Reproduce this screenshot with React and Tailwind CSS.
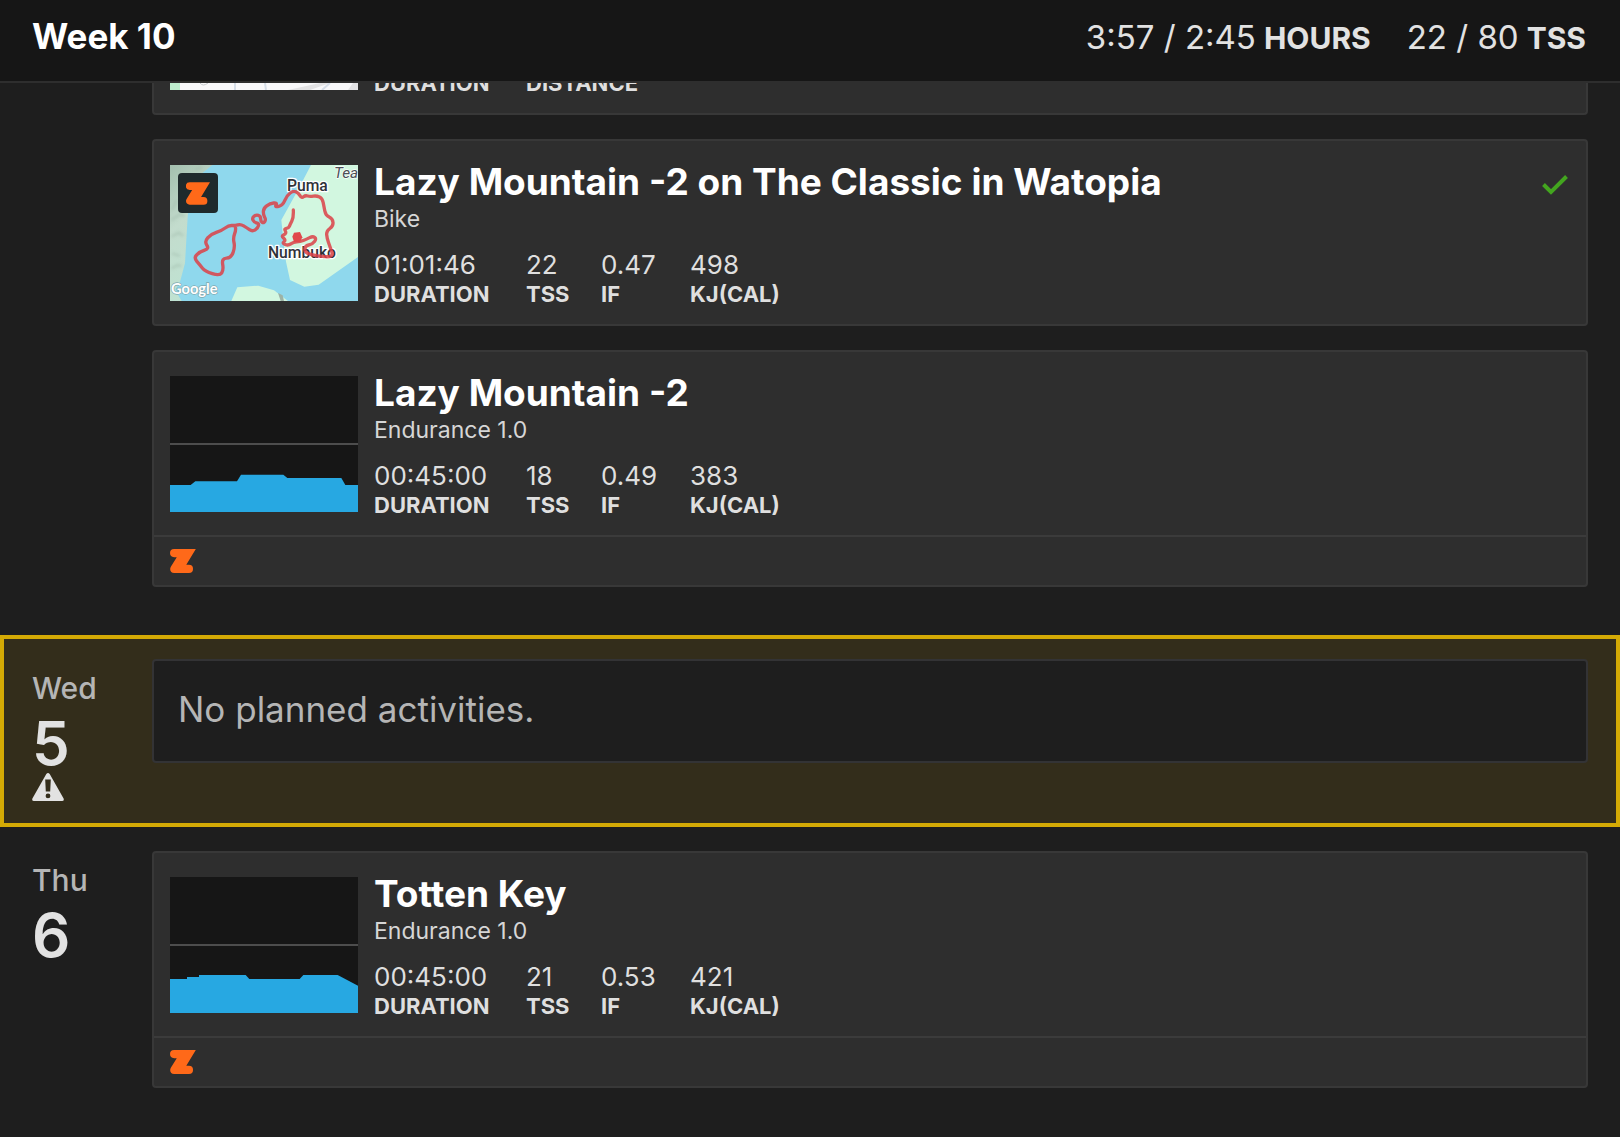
const routePoints = [
  [430, 240], [431, 262], [420, 284], [416, 294], [402, 296], [410, 310], [393, 318], [408, 330], [396, 340], [415, 347],
  [430, 336], [450, 335], [470, 328], [488, 318], [500, 326], [487, 343], [465, 347], [464, 368], [500, 378], [551, 382],
  [540, 350], [531, 325], [529, 303], [550, 288], [548, 266], [527, 256], [522, 230], [517, 205], [500, 197], [480, 200],
  [466, 196], [455, 205], [445, 189], [430, 182], [411, 196], [398, 226], [374, 232], [382, 218], [360, 220], [340, 235],
  [340, 256], [348, 268], [341, 280], [332, 274], [332, 258], [318, 254], [306, 264], [312, 277], [327, 280], [324, 294],
  [307, 305], [290, 293], [272, 282], [255, 287], [236, 286], [215, 302], [183, 312], [163, 335], [178, 356], [150, 365],
  [131, 383], [150, 405], [165, 424], [209, 438], [221, 420], [215, 385], [244, 384], [255, 350], [249, 325], [258, 300],
  [255, 287],
];

// Rounds the corners by running quadratic curves through the segment midpoints.
function smoothPath(points) {
  let d = `M${points[0][0]} ${points[0][1]}`;
  for (let i = 1; i < points.length - 1; i += 1) {
    const [x, y] = points[i];
    const [nx, ny] = points[i + 1];
    d += `Q${x} ${y} ${(x + nx) / 2} ${(y + ny) / 2}`;
  }
  const [lx, ly] = points[points.length - 1];
  return `${d}L${lx} ${ly}`;
}

function Logo({ className }) {
  return (
    <svg viewBox="0 0 78 73" className={className} aria-hidden="true">
      <path
        fill="#ff6919"
        d="M12 0H78L49 48H57a12.5 12.5 0 0 1 0 25H12C2 73 -3 63 2 54L20 25H12A12.5 12.5 0 0 1 12 0Z"
      />
    </svg>
  );
}

function RouteMap() {
  return (
    <div className="relative h-[136px] w-[188px] shrink-0">
      <svg viewBox="60 105 564 408" className="block h-full w-full" role="img" aria-label="Route map">
        <defs>
          <linearGradient id="coast" x1="0" y1="0" x2="0.3" y2="1">
            <stop offset="0" stopColor="#a3bfae" />
            <stop offset="0.45" stopColor="#c3dccd" />
            <stop offset="1" stopColor="#bfe3d2" />
          </linearGradient>
          <filter id="relief" x="-10%" y="-10%" width="120%" height="120%">
            <feGaussianBlur stdDeviation="4" />
          </filter>
        </defs>
        <rect x="60" y="105" width="564" height="408" fill="#8fd8ed" />
        <path fill="url(#coast)" d="M60 105H187L150 135L120 200L113 260L105 400L90 455L75 480L95 513H60Z" />
        <path
          fill="none"
          stroke="#9db8a8"
          strokeWidth="7"
          opacity="0.5"
          filter="url(#relief)"
          d="M64 270l28-18 12 8M64 320l22-12 14 10M66 370l24 8M64 415l20-10 10 4M66 240l14-30M135 118l22-6"
        />
        <path fill="#d2f7e0" d="M483 105L445 178L394 270L400 330L408 395L420 450L463 470L506 464L624 381V105Z" />
        <path fill="#d2f7e0" d="M244 513L262 472L325 467L372 481L414 513Z" />
        <path fill="#9db3a6" d="M384 489L398 496L402 513H392Z" />
        <g fontFamily="Roboto, sans-serif" fill="#2f3339" stroke="#fff" strokeWidth="8" strokeLinejoin="round" paintOrder="stroke">
          <text x="411" y="182" fontSize="47" fontWeight="500">Puma</text>
          <text x="354" y="385" fontSize="47" fontWeight="500">Numbuko</text>
          <text x="552" y="145" fontSize="46" fontStyle="italic" fill="#4a5055" strokeWidth="4">Tea</text>
        </g>
        <path
          fill="none"
          stroke="#dc4146"
          strokeOpacity="0.85"
          strokeWidth="10"
          strokeLinejoin="round"
          strokeLinecap="round"
          d={smoothPath(routePoints)}
        />
        <path fill="#e0484b" d="M432 308L450 306L457 322L450 336H432L427 320Z" />
        <text x="63" y="493" fontFamily="Lato, sans-serif" fontSize="44" fontWeight="700" fill="#fff" stroke="#7fa7ad" strokeWidth="4" paintOrder="stroke">Google</text>
      </svg>
      <span className="absolute top-2 left-2 flex h-10 w-10 items-center justify-center rounded bg-[#1f2a2c]">
        <Logo className="h-[23px] w-6" />
      </span>
    </div>
  );
}

function PowerChart({ points, label }) {
  return (
    <svg viewBox="0 0 564 408" className="block h-[136px] w-[188px] shrink-0 bg-[#161616]" role="img" aria-label={label}>
      <rect y="201" width="564" height="6" fill="#4d4d4d" />
      <polygon fill="#27a8e2" points={`0,408 ${points} 564,408`} />
    </svg>
  );
}

const statGrid = "grid grid-cols-[118px_41px_55px_auto] justify-start gap-x-[34px]";
const labelText = "text-[22px] leading-[27px] font-bold whitespace-nowrap text-[#dfdfdf]";

function ActivityCard({ thumb, title, kind, stats, done, footer }) {
  return (
    <article className="rounded border-2 border-[#383838] bg-[#2e2e2e]">
      <div className="flex gap-4 px-4 pt-6 pb-4">
        {thumb}
        <div className="min-w-0 flex-1">
          <h3 className="text-[37px] leading-[34px] font-bold text-white">{title}</h3>
          <p className="mt-1 text-[23px] leading-8 text-[#d6d6d6]">{kind}</p>
          <dl className={`mt-3.5 ${statGrid}`}>
            {stats.map(([value, name]) => (
              <div key={name} className="flex flex-col-reverse">
                <dt className={labelText}>{name}</dt>
                <dd className="text-[26px] leading-8 whitespace-nowrap text-[#dfdfdf]">{value}</dd>
              </div>
            ))}
          </dl>
        </div>
        {done && (
          <svg viewBox="0 0 26 20" className="mt-2.5 mr-0.5 h-5 w-[26px] shrink-0" role="img" aria-label="Completed">
            <path d="M1.5 9.5L9 17L24.5 1.5" fill="none" stroke="#43a51f" strokeWidth="4" />
          </svg>
        )}
      </div>
      {footer && (
        <div className="border-t-2 border-[#3b3b3b] px-4 py-3">
          <Logo className="h-6 w-[26px]" />
        </div>
      )}
    </article>
  );
}

function DateLabel({ day, date, warning }) {
  return (
    <div className="w-[120px] shrink-0 pt-3">
      <div className="text-[30px] leading-[34px] font-medium text-[#b5b5b5]">{day}</div>
      <div className="mt-2 text-[60px] leading-[60px] font-semibold text-[#e2e2e2]">{date}</div>
      {warning && (
        <svg viewBox="0 0 32 28" className="block h-7 w-8" role="img" aria-label="Warning">
          <path
            fill="#e2e2e2"
            fillRule="evenodd"
            d="M14.3 1Q16 -1 17.7 1L31.6 25.6Q32.4 28 30 28H2Q-0.4 28 0.4 25.6ZM13.2 6.5L13.8 18.5H18.2L18.8 6.5ZM16 20.5A2.4 2.4 0 1 0 16 25.3A2.4 2.4 0 1 0 16 20.5Z"
          />
        </svg>
      )}
    </div>
  );
}

function Total({ value, unit }) {
  return (
    <div className="flex items-baseline gap-2 whitespace-nowrap text-[#e2e2e2]">
      <span className="text-[33px] leading-10">{value}</span>
      <span className="text-[30px] leading-10 font-bold">{unit}</span>
    </div>
  );
}

export default function App() {
  return (
    <div className="min-h-screen bg-[#1e1e1e] font-['Inter',sans-serif]">
      <header className="flex items-baseline justify-between border-b-2 border-[#2e2e2e] bg-[#161616] pt-4 pr-[34px] pb-[23px] pl-8">
        <h1 className="text-[35px] leading-10 font-bold text-white">Week 10</h1>
        <div className="flex gap-9">
          <Total value="3:57 / 2:45" unit="HOURS" />
          <Total value="22 / 80" unit="TSS" />
        </div>
      </header>

      <main>
        <section className="flex px-8 pb-12">
          <div className="w-[120px] shrink-0" />
          <div className="flex min-w-0 flex-1 flex-col gap-6">
            <article className="flex h-8 items-end gap-4 overflow-hidden rounded-b border-2 border-t-0 border-[#383838] bg-[#2e2e2e] px-4 pb-4">
              <svg viewBox="0 0 188 7" className="mb-[7px] block h-[7px] w-[188px] shrink-0" aria-hidden="true">
                <rect width="188" height="7" fill="#f8f8fa" />
                <rect width="10" height="7" fill="#bdeccd" />
                <path fill="#e2e2e4" d="M118 7L150 0H160L140 7ZM178 7L183 0H188V7Z" />
                <path fill="none" stroke="#c5c9cc" d="M30 0Q33 4 38 0" />
                <path fill="none" stroke="#d5dde8" strokeWidth="2" d="M65 0V7M95 0L96 7M152 7L160 0" />
              </svg>
              <div className={statGrid}>
                <span className={labelText}>DURATION</span>
                <span className={labelText}>DISTANCE</span>
              </div>
            </article>
            <ActivityCard
              thumb={<RouteMap />}
              title="Lazy Mountain -2 on The Classic in Watopia"
              kind="Bike"
              stats={[["01:01:46", "DURATION"], ["22", "TSS"], ["0.47", "IF"], ["498", "KJ(CAL)"]]}
              done
            />
            <ActivityCard
              thumb={
                <PowerChart
                  label="Power profile"
                  points="0,327 62,327 76,316 201,316 213,296 340,296 352,306 514,306 526,327 564,327"
                />
              }
              title="Lazy Mountain -2"
              kind="Endurance 1.0"
              stats={[["00:45:00", "DURATION"], ["18", "TSS"], ["0.49", "IF"], ["383", "KJ(CAL)"]]}
              footer
            />
          </div>
        </section>

        <section className="flex items-start border-4 border-[#d4aa05] bg-[#332d1b] px-7 pt-5 pb-[22px]">
          <DateLabel day="Wed" date="5" warning />
          <div className="min-w-0 flex-1 rounded border-2 border-[#333335] bg-[#1e1e1e] px-6 pt-6 pb-7 text-[35px] leading-[48px] text-[#b5b5b5]">
            No planned activities.
          </div>
        </section>

        <section className="flex px-8 pt-6 pb-12">
          <DateLabel day="Thu" date="6" />
          <div className="min-w-0 flex-1">
            <ActivityCard
              thumb={
                <PowerChart
                  label="Power profile"
                  points="0,306 51,306 51,300 87,300 87,294 227,294 238,306 389,306 400,294 503,294 564,326"
                />
              }
              title="Totten Key"
              kind="Endurance 1.0"
              stats={[["00:45:00", "DURATION"], ["21", "TSS"], ["0.53", "IF"], ["421", "KJ(CAL)"]]}
              footer
            />
          </div>
        </section>
      </main>
    </div>
  );
}
